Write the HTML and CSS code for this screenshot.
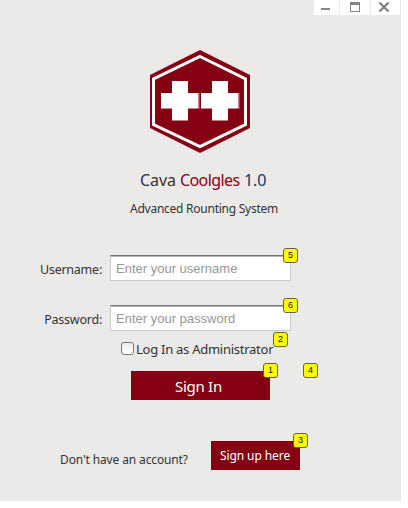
FILE: index.html
```
<!DOCTYPE html>
<html lang="en">
<head>
<meta charset="utf-8">
<title>Cava Coolgles</title>
<link rel="stylesheet" href="styles.css">
</head>
<body>
<main class="window">
  <header class="controls">
    <button class="control" aria-label="Minimize"><svg width="12" height="12" viewBox="0 0 12 12"><path d="M1 8h9" stroke="#858585" stroke-width="2"/></svg></button>
    <button class="control middle" aria-label="Maximize"><svg width="12" height="12" viewBox="0 0 12 12"><path d="M1 1h10v10H1z M2 4v6h8V4z" fill="#858585" fill-rule="evenodd"/></svg></button>
    <button class="control" aria-label="Close"><svg width="12" height="12" viewBox="0 0 12 12"><path d="M1.500 1.500l9 9M10.500 1.500l-9 9" stroke="#808080" stroke-width="2.300"/></svg></button>
  </header>
  <svg class="logo" width="102" height="105" viewBox="0 0 102 105">
    <path d="M51 1L101 26V79L51 104L1 79V26z" fill="#860014"/>
    <path d="M51 7.500L96.500 30V75.500L51 97.500L4.500 75.500V30z" fill="none" stroke="#fff" stroke-width="3"/>
    <path d="M23 32h16v12h10.500v15H39v12H23V59H12V44h11zM63 32h16v12h10.500v15H79v12H63V59H52V44h11z" fill="#fff"/>
    <path d="M12 59.500h11M39 59.500h11V44M23 71.500h16M52 59.500h11M79 59.500h11V44M63 71.500h16" fill="none" stroke="#bd8589"/>
  </svg>
  <h1 class="title"><span class="cava">Cava</span><span class="red">Coolgles</span><span class="blue">1.0</span></h1>
  <p class="tagline">Advanced Rounting System</p>
  <form class="form">
    <div class="field"><label class="label" for="user">Username:</label><div class="entry"><input id="user" type="text" placeholder="Enter your username"><span class="badge">5</span></div></div>
    <div class="field"><label class="label" for="pass">Password:</label><div class="entry"><input id="pass" type="password" placeholder="Enter your password"><span class="badge">6</span></div></div>
    <label class="admin"><input class="check" type="checkbox"><span>Log In as Administrator</span><span class="badge">2</span></label>
    <div class="login"><button class="button signin" type="button">Sign In<span class="badge">1</span></button><span class="badge extra">4</span></div>
  </form>
  <footer class="signup"><span class="question">Don't have an account?</span><button class="button join">Sign up here<span class="badge">3</span></button></footer>
</main>
</body>
</html>
```
FILE: styles.css
```
* { box-sizing: border-box; }
body { margin: 0; background: #fff; color: #333; font-family: "Trebuchet MS", "Noto Sans", sans-serif; }
button { font-family: inherit; border: 0; padding: 0; }
.window { width: 401px; height: 501px; background: #ebeae8; display: flex; flex-direction: column; overflow: hidden; }
.controls { display: flex; gap: 1px; align-self: flex-end; height: 15px; margin-right: 1px; }
.control { width: 25px; height: 15px; background: #fff; display: flex; align-items: flex-start; justify-content: center; padding-top: 1px; }
.control:first-child { padding-right: 1px; }
.control.middle { width: 30px; }
.control:last-child { width: 29px; padding-right: 3px; }
.logo { display: block; margin: 34px 0 0 149px; flex: none; }
.title { display: flex; margin: 14px 0 0 140px; font-size: 16px; line-height: 24px; font-weight: 400; white-space: nowrap; }
.cava { width: 40px; letter-spacing: -.1px; }
.red { width: 64px; color: #8b0019; letter-spacing: -.6px; }
.blue { color: #0a3a70; letter-spacing: -.1px; }
.tagline { margin: 8px 0 0 130px; font-size: 12px; line-height: 18px; white-space: nowrap; letter-spacing: -.25px; }
.form { margin-top: 37px; }
.field { display: flex; align-items: center; height: 26px; margin-bottom: 24px; }
.label { width: 102px; margin-right: 8px; text-align: right; font-size: 12.5px; letter-spacing: -.24px; white-space: nowrap; padding-top: 2px; }
.entry { position: relative; width: 181px; height: 26px; }
.entry input { display: block; width: 181px; height: 26px; border: 1px solid #c9c9c9; border-top: 1px solid #737373; border-radius: 0; box-shadow: inset 0 1px #b5b5b5; background: #fff; padding: 2px 5px 1px; font: 13px "Liberation Sans", sans-serif; }
.entry input::placeholder { color: #979797; opacity: 1; }
.badge { position: absolute; top: -8px; right: -8px; width: 15px; height: 15px; background: #ff0; border: 1px solid #66624a; border-radius: 3px; color: #111; font: 9px/13px "Liberation Sans", sans-serif; letter-spacing: 0; text-align: center; }
.entry .badge { top: -7px; right: -7px; }
.admin { position: relative; display: flex; align-items: center; width: 153px; height: 18px; margin: -15px 0 13px 121px; font-size: 13px; line-height: 18px; letter-spacing: -.26px; white-space: nowrap; }
.admin .badge { right: -14px; }
.check { appearance: none; width: 13px; height: 13px; border: 1px solid #777; border-radius: 3px; background: linear-gradient(#ececec, #fff); margin: -2px 2px 0 0; flex: none; }
.login { position: relative; width: 187px; height: 29px; margin-left: 131px; }
.login .extra { right: 0; }
.button { position: relative; display: block; height: 29px; background: #860014; color: #fff; white-space: nowrap; }
.signin { width: 139px; font-size: 15px; letter-spacing: -.3px; padding: 1px 4px 0 0; }
.signup { display: flex; align-items: center; margin: 41px 0 0 60px; height: 29px; font-size: 12px; }
.question { width: 151px; padding-top: 7px; white-space: nowrap; letter-spacing: -.13px; }
.join { width: 89px; font-size: 12px; letter-spacing: -.08px; padding-right: 1px; }
```
